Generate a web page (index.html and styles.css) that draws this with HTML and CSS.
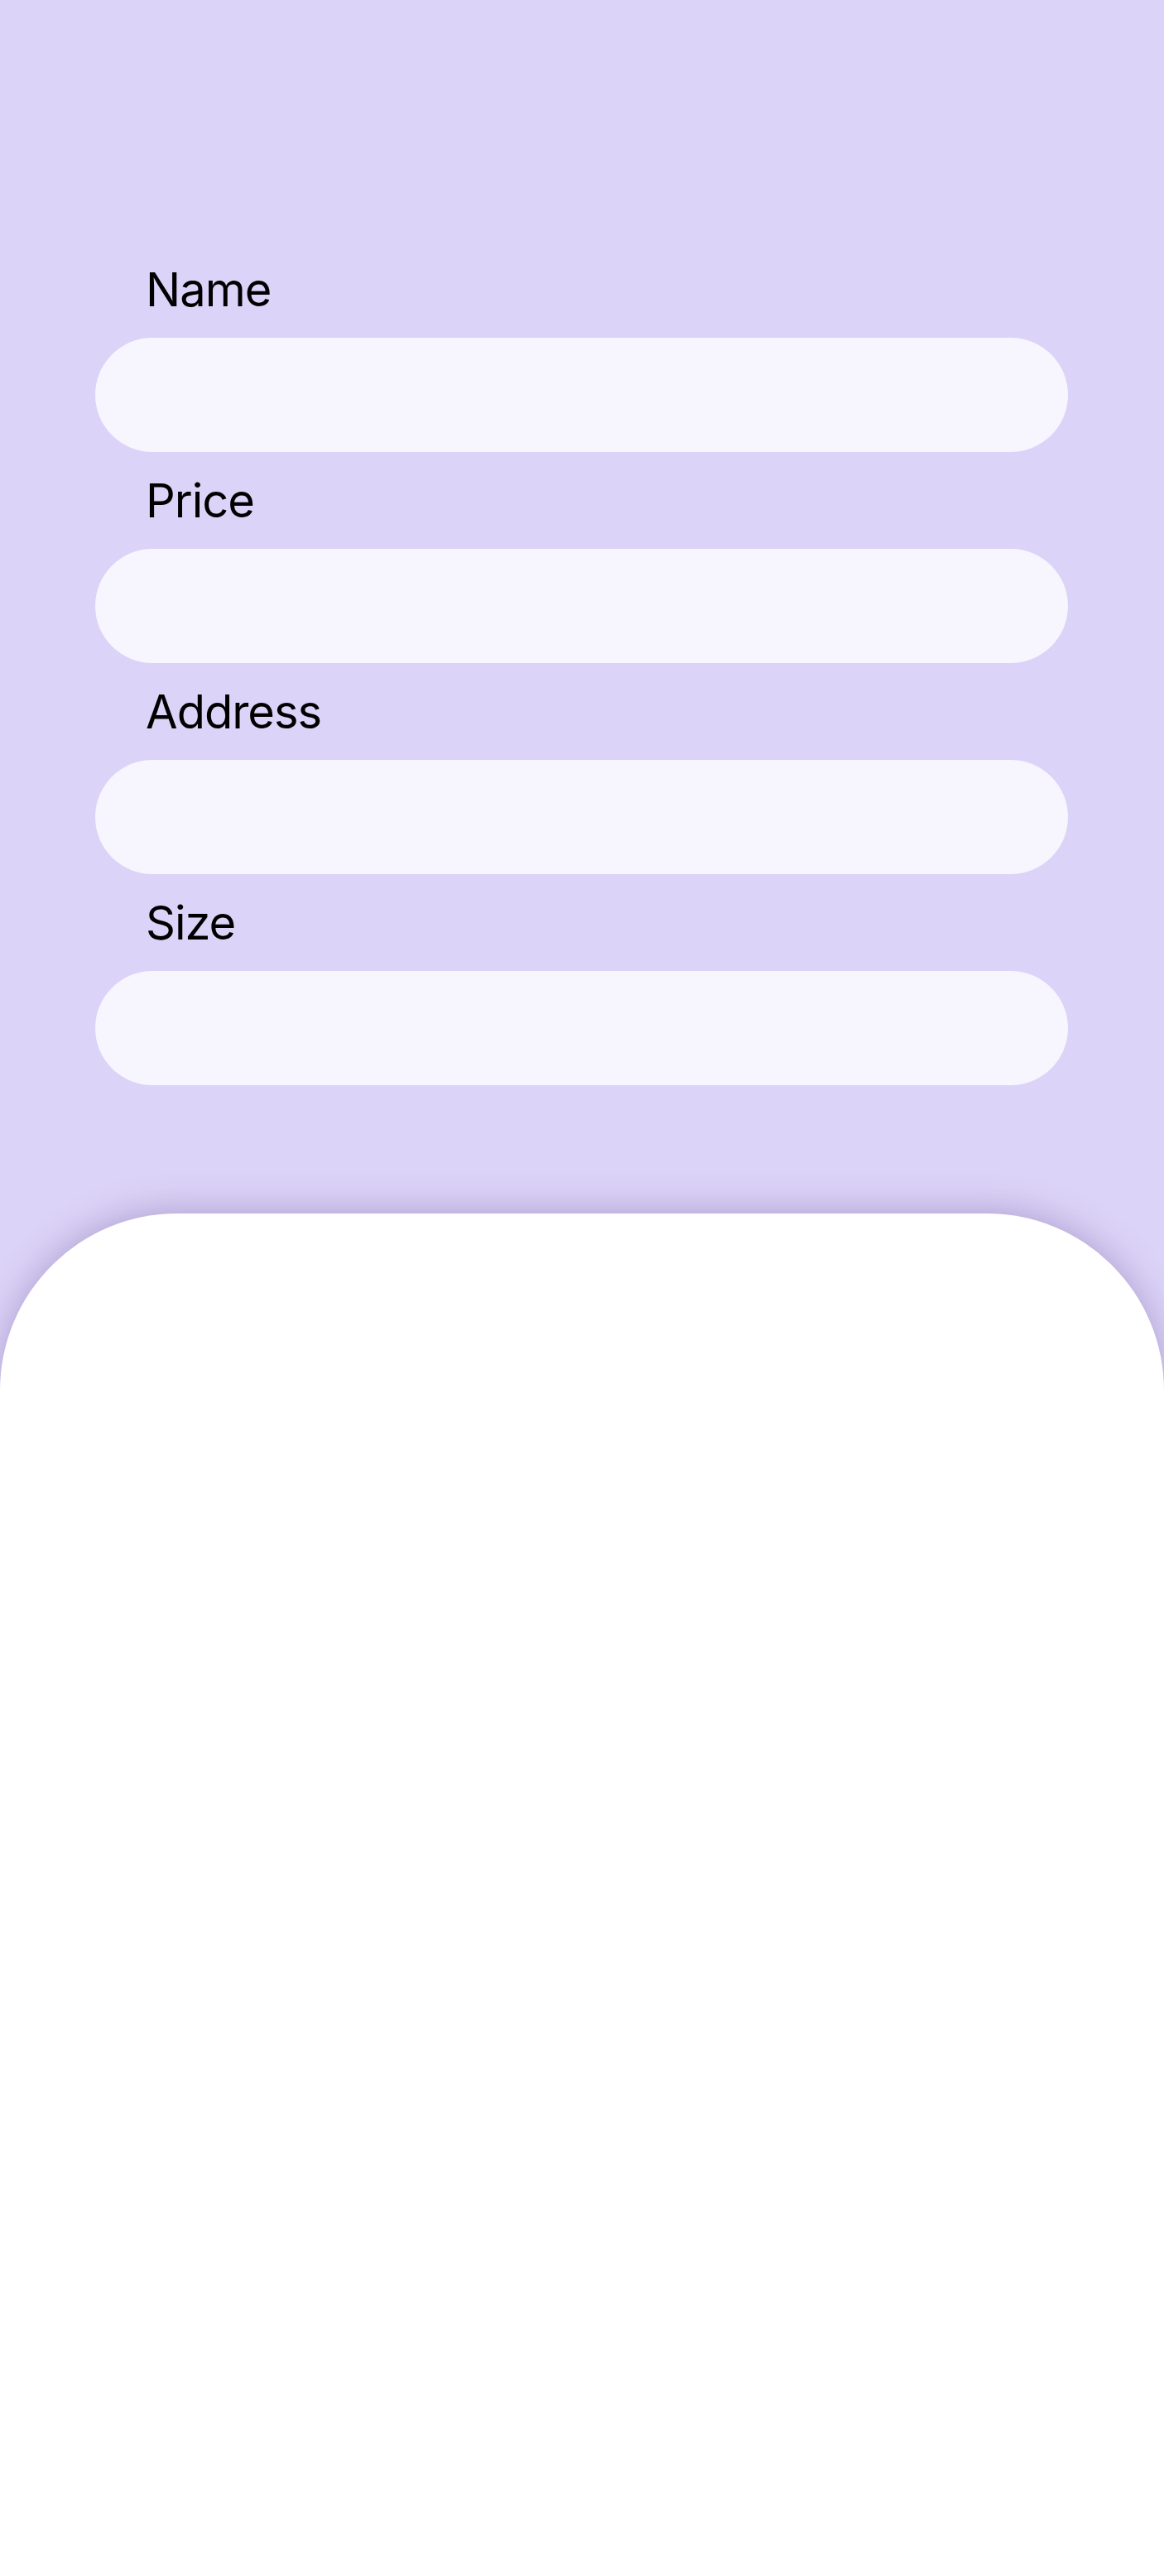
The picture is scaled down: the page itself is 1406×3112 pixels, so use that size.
FILE: index.html
```html
<!DOCTYPE html>
<html lang="en">
<head>
<meta charset="utf-8">
<title>Form</title>
<link rel="stylesheet" href="styles.css">
</head>
<body>
<main class="page">
  <form class="form">
    <div class="field">
      <label class="label" for="name">Name</label>
      <input class="input" id="name" type="text">
    </div>
    <div class="field">
      <label class="label" for="price">Price</label>
      <input class="input" id="price" type="text">
    </div>
    <div class="field">
      <label class="label" for="address">Address</label>
      <input class="input" id="address" type="text">
    </div>
    <div class="field">
      <label class="label" for="size">Size</label>
      <input class="input" id="size" type="text">
    </div>
  </form>
  <section class="sheet"></section>
</main>
</body>
</html>
```

FILE: styles.css
```css
html, body {
  margin: 0;
  padding: 0;
}
body {
  background: #dcd3f8;
  font-family: Inter, "Noto Sans", sans-serif;
  color: #000;
}
.page {
  display: flex;
  flex-direction: column;
  min-height: 3112px;
  overflow: hidden;
}
.form {
  display: flex;
  flex-direction: column;
  padding: 316px 116px 0 115px;
}
.field {
  display: flex;
  flex-direction: column;
  padding-bottom: 25px;
}
.label {
  font-size: 56px;
  line-height: 68px;
  font-weight: 400;
  letter-spacing: -1px;
  padding-left: 61px;
  margin-bottom: 24px;
}
.input {
  display: block;
  box-sizing: border-box;
  width: 100%;
  height: 138px;
  border: none;
  border-radius: 69px;
  background: #f7f5fe;
  outline: none;
  padding: 0 60px;
  font: inherit;
}
.sheet {
  margin-top: 130px;
  flex: 1;
  background: #fff;
  border-radius: 214px 214px 0 0;
  box-shadow: 0 -4px 40px rgba(105, 85, 150, 0.38);
}
```
